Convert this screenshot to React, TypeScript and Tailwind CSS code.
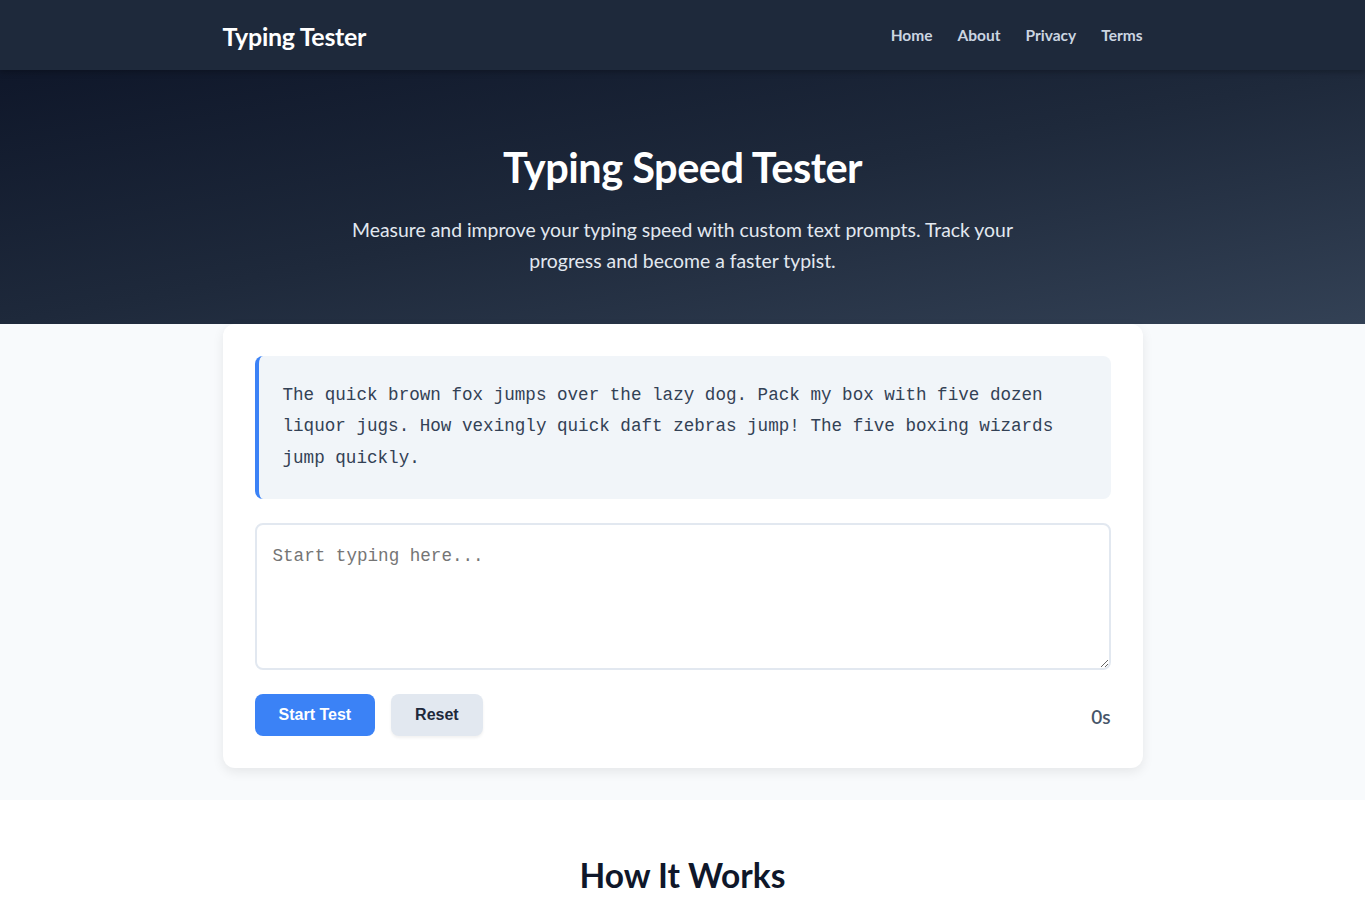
import { useState } from 'react';

const PROMPT =
  'The quick brown fox jumps over the lazy dog. Pack my box with five dozen liquor jugs. How vexingly quick daft zebras jump! The five boxing wizards jump quickly.';

const navLinks = ['Home', 'About', 'Privacy', 'Terms'];

const App = () => {
  const [typed, setTyped] = useState('');
  const [seconds] = useState(0);

  return (
    <div className="min-h-screen bg-white font-['Lato','Liberation_Sans',sans-serif]">
      {/* top bar */}
      <header className="bg-[#1e293b] shadow-[0_2px_6px_rgba(0,0,0,0.25)] relative z-10">
        <div className="mx-auto flex h-[70px] w-[920px] items-center justify-between">
          <span className="pt-[4px] text-[25px] font-bold tracking-[-0.3px] text-white">Typing Tester</span>
          <nav className="flex items-center gap-[25px] pt-[2px]">
            {navLinks.map((link) => (
              <a key={link} href="#" className="text-[15.5px] font-bold text-[#cbd5e1]">
                {link}
              </a>
            ))}
          </nav>
        </div>
      </header>

      {/* hero */}
      <section className="bg-gradient-to-br from-[#0f172a] via-[#1e293b] to-[#334155] pt-[73px] pb-[48px] text-center">
        <h1 className="text-[41.5px] font-bold leading-[1.2] tracking-[-0.5px] text-white">Typing Speed Tester</h1>
        <p className="mx-auto mt-[21px] max-w-[700px] text-[19.4px] leading-[31px] text-[#e2e8f0]">
          Measure and improve your typing speed with custom text prompts. Track your progress and become a faster
          typist.
        </p>
      </section>

      {/* tester card */}
      <section className="bg-[#f8fafc] pb-8">
        <div className="mx-auto w-[920px] rounded-xl bg-white p-8 shadow-[0_4px_12px_rgba(0,0,0,0.08)]">
          <div className="rounded-lg border-l-4 border-[#3b82f6] bg-[#f1f5f9] px-6 py-6 font-['Liberation_Mono','Courier_New',monospace] text-[17.6px] leading-[1.8] text-[#334155]">
            {PROMPT}
          </div>
          <textarea
            value={typed}
            onChange={(e) => setTyped(e.target.value)}
            placeholder="Start typing here..."
            className="mt-6 block h-[147px] w-full rounded-lg border-2 border-[#e2e8f0] bg-white px-4 py-[17px] font-['Liberation_Mono','Courier_New',monospace] text-[17.6px] leading-[1.6] text-[#1e293b] outline-none placeholder:text-[#757575]"
          />
          <div className="mt-6 flex items-center justify-between">
            <div className="flex gap-4">
              <button className="h-[42px] rounded-lg bg-[#3b82f6] px-6 font-['Liberation_Sans',Arial,sans-serif] text-[16px] font-bold text-white">
                Start Test
              </button>
              <button className="h-[42px] rounded-lg bg-[#e2e8f0] px-6 font-['Liberation_Sans',Arial,sans-serif] text-[16px] font-bold text-[#1e293b] shadow-[0_2px_3px_rgba(0,0,0,0.06)]">
                Reset
              </button>
            </div>
            <span className="pt-1 text-[19px] font-semibold text-[#475569]">{seconds}s</span>
          </div>
        </div>
      </section>

      {/* info */}
      <section className="bg-white pt-[50px] pb-16 text-center">
        <h2 className="text-[33.5px] font-bold text-[#0f172a]">How It Works</h2>
      </section>
    </div>
  );
};

export default App;
